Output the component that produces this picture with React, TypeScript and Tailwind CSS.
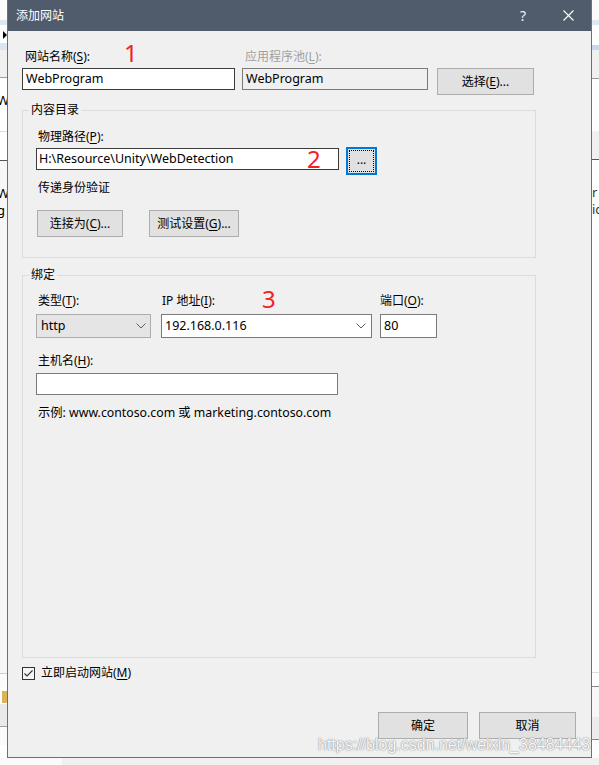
import React from "react";

const font = "font-['Noto_Sans','Noto_Sans_CJK_SC',sans-serif]";

function Key({ children }: { children: string }): React.ReactElement {
  return <span className="underline decoration-1 underline-offset-[2px]">{children}</span>;
}

function Btn({ children, className = "" }: { children: React.ReactNode; className?: string }): React.ReactElement {
  return (
    <div className={`flex h-[27px] items-center justify-center border border-[#adadad] bg-[#e1e1e1] text-[12px] leading-[16px] text-black ${className}`}>
      {children}
    </div>
  );
}

function Chevron(): React.ReactElement {
  return (
    <svg width="10" height="6" viewBox="0 0 10 6" className="shrink-0">
      <polyline points="0.5,0.5 5,5 9.5,0.5" fill="none" stroke="#606060" strokeWidth="1" />
    </svg>
  );
}

function Band({ h, c, children }: { h: string; c: string; children?: React.ReactNode }): React.ReactElement {
  return <div className={`${h} ${c} overflow-hidden text-[13px] leading-[16px]`}>{children}</div>;
}

export default function App(): React.ReactElement {
  return (
    <div className={`relative h-[765px] w-[599px] overflow-hidden bg-white ${font}`}>
      <div className="flex h-[758px]">
        {/* window behind, left edge */}
        <div className="flex w-[7px] flex-col">
          <Band h="h-[20px]" c="bg-[#fbfbfb]" />
          <Band h="h-[5px]" c="bg-[#dfe7f1]" />
          <Band h="h-[18px]" c="bg-white">
            <div className="ml-[3px] mt-[6px] h-0 w-0 border-y-[4px] border-l-[4px] border-y-transparent border-l-black" />
          </Band>
          <Band h="h-[7px]" c="bg-[#dde5f0]" />
          <Band h="h-[28px]" c="bg-[#f0f0f0] border-b border-[#a0a0a0]" />
          <Band h="h-[54px]" c="bg-white border-b border-[#dcdcdc]">
            <div className="mt-[14px] -ml-[3px] text-black">W</div>
          </Band>
          <Band h="h-[29px]" c="bg-white border-b border-[#555]" />
          <Band h="h-[513px]" c="bg-[#f7f7f7] border-b border-[#d0d0d0]">
            <div className="mt-[24px] -ml-[3px] text-black">W</div>
            <div className="-ml-[3px] mt-[1px] text-black">g</div>
          </Band>
          <Band h="h-[14px]" c="bg-[#fbfbfb]" />
          <Band h="h-[16px]" c="bg-white">
            <div className="ml-[2px] mt-[3px] h-[12px] w-[6px] bg-[#d9b45a]" />
          </Band>
          <Band h="h-[23px]" c="bg-[#e9e9e9] border-b border-[#a0a0a0]" />
          <Band h="h-[18px]" c="bg-[#fafafa]" />
        </div>

        {/* dialog */}
        <div className="flex h-[758px] w-[585px] flex-col border-x border-b border-[#6b7078] bg-[#f0f0f0]">
          <div className="flex h-[31px] shrink-0 items-center bg-[#505c6b] pl-[8px] text-[12px] leading-[16px] text-white">
            <span>添加网站</span>
            <span className="ml-auto text-[14px] text-[#f0f0f0]">?</span>
            <svg width="11" height="11" viewBox="0 0 11 11" className="ml-[37px] mr-[17px]">
              <path d="M0.5 0.5 L10.5 10.5 M10.5 0.5 L0.5 10.5" stroke="#ffffff" strokeWidth="1.1" />
            </svg>
          </div>

          <div className="flex flex-1 flex-col pl-[14px] pt-[18px] text-[12px] leading-[16px] text-black">
            {/* name / pool row */}
            <div className="flex items-start">
              <div className="flex w-[213px] flex-col">
                <div className="pl-[3px]">
                  网站名称(<Key>S</Key>):
                </div>
                <div className="mt-[3px] flex h-[22px] items-center border border-[#3c3c3c] bg-white pl-[3px] text-[12.5px]">WebProgram</div>
              </div>
              <div className="ml-[7px] flex w-[186px] flex-col">
                <div className="pl-[3px] text-[#a0a0a0]">
                  应用程序池(<Key>L</Key>):
                </div>
                <div className="mt-[3px] flex h-[22px] items-center border border-[#7a7a7a] bg-[#f0f0f0] pl-[3px] text-[12.5px]">WebProgram</div>
              </div>
              <Btn className="ml-[9px] mt-[19px] w-[97px]">
                选择(<Key>E</Key>)...
              </Btn>
            </div>

            {/* content directory */}
            <fieldset className="mt-[7px] w-[514px] border border-[#dcdcdc] p-0">
              <legend className="ml-[6px] px-[2px]">内容目录</legend>
              <div className="pb-[20px] pl-[13px]">
                <div className="mt-[11px] pl-[2px]">
                  物理路径(<Key>P</Key>):
                </div>
                <div className="mt-[2px] flex items-start">
                  <div className="mt-[1px] flex h-[22px] w-[303px] items-center border border-[#3c3c3c] bg-white pl-[2px] text-[12.5px]">
                    H:\Resource\Unity\WebDetection
                  </div>
                  <div className="ml-[7px] flex h-[28px] w-[31px] items-center justify-center border-2 border-[#0078d7] bg-[#e1e1e1] p-[1px]">
                    <div className="flex h-full w-full items-center justify-center border border-dotted border-black pb-[2px]">...</div>
                  </div>
                </div>
                <div className="mt-[5px] pl-[2px]">传递身份验证</div>
                <div className="mt-[14px] flex">
                  <Btn className="ml-[1px] w-[86px]">
                    连接为(<Key>C</Key>)...
                  </Btn>
                  <Btn className="ml-[26px] w-[90px]">
                    测试设置(<Key>G</Key>)...
                  </Btn>
                </div>
              </div>
            </fieldset>

            {/* binding */}
            <fieldset className="mt-[9px] h-[391px] w-[514px] border border-[#dcdcdc] p-0">
              <legend className="ml-[6px] px-[2px]">绑定</legend>
              <div className="pl-[13px]">
                <div className="mt-[10px] flex items-start">
                  <div className="flex w-[115px] flex-col">
                    <div className="pl-[2px]">
                      类型(<Key>T</Key>):
                    </div>
                    <div className="mt-[5px] flex h-[24px] items-center border border-[#adadad] bg-[#e5e5e5] pl-[4px] pr-[4px] text-[12.5px]">
                      <span className="flex-1">http</span>
                      <Chevron />
                    </div>
                  </div>
                  <div className="ml-[10px] flex w-[211px] flex-col">
                    <div className="pl-[1px]">
                      IP 地址(<Key>I</Key>):
                    </div>
                    <div className="mt-[5px] flex h-[24px] items-center border border-[#7a7a7a] bg-white pl-[3px] pr-[5px] text-[12.5px]">
                      <span className="flex-1">192.168.0.116</span>
                      <Chevron />
                    </div>
                  </div>
                  <div className="ml-[8px] flex w-[57px] flex-col">
                    <div>
                      端口(<Key>O</Key>):
                    </div>
                    <div className="mt-[5px] flex h-[24px] items-center border border-[#7a7a7a] bg-white pl-[3px] text-[12.5px]">80</div>
                  </div>
                </div>
                <div className="mt-[15px] pl-[2px]">
                  主机名(<Key>H</Key>):
                </div>
                <div className="mt-[4px] h-[22px] w-[302px] border border-[#7a7a7a] bg-white" />
                <div className="mt-[10px] pl-[2px] text-[12.3px]">示例: www.contoso.com 或 marketing.contoso.com</div>
              </div>
            </fieldset>

            <div className="mt-[7px] flex h-[16px] items-center">
              <div className="flex h-[13px] w-[13px] items-center justify-center border border-[#333] bg-[#f4f4f4]">
                <svg width="11" height="11" viewBox="0 0 11 11">
                  <polyline points="1.5,5.5 4,8 9.5,2.5" fill="none" stroke="#333" strokeWidth="1.1" />
                </svg>
              </div>
              <span className="ml-[6px]">
                立即启动网站(<Key>M</Key>)
              </span>
            </div>

            <div className="mr-[15px] mt-[31px] flex justify-end">
              <Btn className="w-[90px]">确定</Btn>
              <Btn className="ml-[11px] w-[97px]">取消</Btn>
            </div>
          </div>
        </div>

        {/* window behind, right edge */}
        <div className="flex w-[7px] flex-col">
          <Band h="h-[20px]" c="bg-[#fbfbfb]" />
          <Band h="h-[5px]" c="bg-[#dfe7f1]" />
          <Band h="h-[20px]" c="bg-white" />
          <Band h="h-[5px]" c="bg-[#c9d7ea]" />
          <Band h="h-[29px]" c="bg-[#f0f0f0] border-b border-[#999]" />
          <Band h="h-[52px]" c="bg-white" />
          <Band h="h-[29px]" c="bg-[#f0f0f0] border-b border-[#555]" />
          <Band h="h-[513px]" c="bg-white border-b border-[#dcdcdc]">
            <div className="mt-[24px] text-[#333]">r</div>
            <div className="mt-[1px] text-[#333]">ic</div>
          </Band>
          <Band h="h-[14px]" c="bg-white border-b border-[#888]" />
          <Band h="h-[30px]" c="bg-[#f7f7f7]" />
          <Band h="h-[23px]" c="bg-[#ececec] border-b border-[#888]" />
          <Band h="h-[18px]" c="bg-white" />
        </div>
      </div>
      <div className="flex h-[7px]">
        <div className="w-[62px] bg-[#fafafa]" />
        <div className="flex-1 bg-[#f0f0f0]" />
      </div>

      {/* red annotation numbers */}
      <span className="absolute left-[124px] top-[41px] font-['Noto_Sans',sans-serif] text-[24px] leading-[24px] text-[#f32222]">1</span>
      <span className="absolute left-[307px] top-[147px] font-['Noto_Sans',sans-serif] text-[24px] leading-[24px] text-[#f32222]">2</span>
      <span className="absolute left-[262px] top-[287px] font-['Noto_Sans',sans-serif] text-[24px] leading-[24px] text-[#f32222]">3</span>

      {/* watermark */}
      <span className="absolute left-[318px] top-[735px] font-['Liberation_Sans',sans-serif] text-[16px] leading-[20px] text-[#f8f8f8] [text-shadow:0_0_1px_#777,0_0_2px_#aaa]">
        https://blog.csdn.net/weixin_38484443
      </span>
    </div>
  );
}
